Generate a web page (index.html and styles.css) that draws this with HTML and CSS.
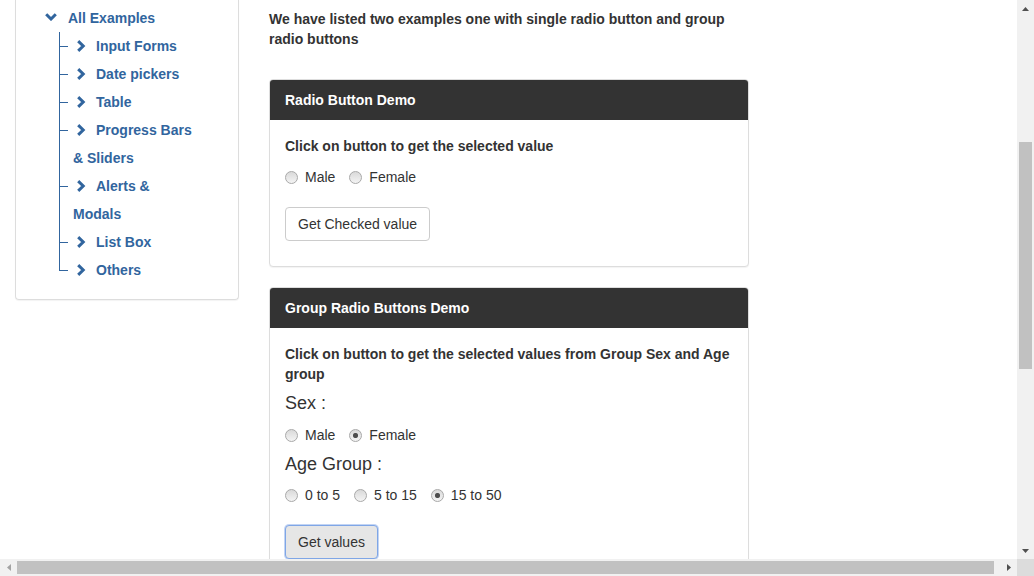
FILE: index.html
```html
<!DOCTYPE html>
<html lang="en">
<head>
<meta charset="utf-8">
<title>Radio Button Demo</title>
<link rel="stylesheet" href="styles.css">
</head>
<body>
<div class="window">
  <div class="viewport">
    <div class="page">
      <aside class="sidebar">
        <div class="tree-root">
          <svg class="chev-down" viewBox="0 0 12 8" width="12" height="8"><path d="M1.2 1.3 L6 6 L10.8 1.3"/></svg><a class="tree-link">All Examples</a>
        </div>
        <ul class="tree">
          <li><svg class="chev-right" viewBox="0 0 10 12" width="10" height="12"><path d="M2.2 1.2 L7.2 6 L2.2 10.8"/></svg><a class="tree-link">Input Forms</a></li>
          <li><svg class="chev-right" viewBox="0 0 10 12" width="10" height="12"><path d="M2.2 1.2 L7.2 6 L2.2 10.8"/></svg><a class="tree-link">Date pickers</a></li>
          <li><svg class="chev-right" viewBox="0 0 10 12" width="10" height="12"><path d="M2.2 1.2 L7.2 6 L2.2 10.8"/></svg><a class="tree-link">Table</a></li>
          <li><svg class="chev-right" viewBox="0 0 10 12" width="10" height="12"><path d="M2.2 1.2 L7.2 6 L2.2 10.8"/></svg><a class="tree-link">Progress Bars &amp; Sliders</a></li>
          <li><svg class="chev-right" viewBox="0 0 10 12" width="10" height="12"><path d="M2.2 1.2 L7.2 6 L2.2 10.8"/></svg><a class="tree-link">Alerts &amp; Modals</a></li>
          <li><svg class="chev-right" viewBox="0 0 10 12" width="10" height="12"><path d="M2.2 1.2 L7.2 6 L2.2 10.8"/></svg><a class="tree-link">List Box</a></li>
          <li><svg class="chev-right" viewBox="0 0 10 12" width="10" height="12"><path d="M2.2 1.2 L7.2 6 L2.2 10.8"/></svg><a class="tree-link">Others</a></li>
        </ul>
      </aside>

      <main class="content">
        <p class="intro">We have listed two examples one with single radio button and group radio buttons</p>

        <section class="panel">
          <div class="panel-heading">Radio Button Demo</div>
          <div class="panel-body">
            <p class="bold-text">Click on button to get the selected value</p>
            <div class="radio-row first-row">
              <label class="radio-label"><input class="radio" type="radio" name="optradio" value="Male">Male</label>
              <label class="radio-label"><input class="radio" type="radio" name="optradio" value="Female">Female</label>
            </div>
            <button class="btn btn-single" type="button">Get Checked value</button>
          </div>
        </section>

        <section class="panel">
          <div class="panel-heading">Group Radio Buttons Demo</div>
          <div class="panel-body">
            <p class="bold-text">Click on button to get the selected values from Group Sex and Age group</p>
            <h4 class="group-title sex-title">Sex :</h4>
            <div class="radio-row">
              <label class="radio-label"><input class="radio" type="radio" name="gender" value="Male">Male</label>
              <label class="radio-label"><input class="radio" type="radio" name="gender" value="Female" checked>Female</label>
            </div>
            <h4 class="group-title age-title">Age Group :</h4>
            <div class="radio-row">
              <label class="radio-label"><input class="radio" type="radio" name="ageGroup" value="0 - 5">0 to 5</label>
              <label class="radio-label"><input class="radio" type="radio" name="ageGroup" value="5 - 15">5 to 15</label>
              <label class="radio-label"><input class="radio" type="radio" name="ageGroup" value="15 - 50" checked>15 to 50</label>
            </div>
            <button class="btn btn-focused" type="button">Get values</button>
          </div>
        </section>
      </main>
    </div>
  </div>

  <div class="vscroll">
    <div class="sb-btn"><svg viewBox="0 0 7 4" width="7" height="4"><polygon class="arrow-dark" points="0,4 3.5,0 7,4"/></svg></div>
    <div class="vtrack"><div class="vthumb"></div></div>
    <div class="sb-btn"><svg viewBox="0 0 7 4" width="7" height="4"><polygon class="arrow-dark" points="0,0 7,0 3.5,4"/></svg></div>
  </div>

  <div class="hscroll">
    <div class="sb-btn"><svg viewBox="0 0 4 7" width="4" height="7"><polygon class="arrow-light" points="4,0 4,7 0,3.5"/></svg></div>
    <div class="htrack"><div class="hthumb"></div></div>
    <div class="sb-btn"><svg viewBox="0 0 4 7" width="4" height="7"><polygon class="arrow-dark" points="0,0 4,3.5 0,7"/></svg></div>
  </div>

  <div class="corner"></div>
</div>
</body>
</html>
```

FILE: styles.css
```css
* { box-sizing: border-box; }

html, body {
  margin: 0;
  padding: 0;
  overflow: hidden;
  background: #fff;
}

body {
  font-family: "Liberation Sans", Arial, Helvetica, sans-serif;
  font-size: 14px;
  line-height: 20px;
  color: #333;
}

.window {
  display: grid;
  grid-template-columns: 1017px 17px;
  grid-template-rows: 559px 17px;
  width: 1034px;
  height: 576px;
}

.viewport {
  overflow: hidden;
  background: #fff;
}

.page {
  display: flex;
  align-items: flex-start;
  padding-left: 15px;
}

/* ---------- Sidebar tree ---------- */
.sidebar {
  width: 224px;
  flex: none;
  border: 1px solid #ddd;
  border-top: none;
  border-radius: 0 0 4px 4px;
  box-shadow: 0 1px 1px rgba(0, 0, 0, 0.05);
  padding: 4px 0 15px 0;
}

.tree-link {
  color: #31659e;
  font-weight: bold;
  text-decoration: none;
}

.tree-root {
  line-height: 28px;
  padding-left: 29px;
  display: flex;
  align-items: center;
}

.chev-down {
  flex: none;
  margin-right: 11px;
  margin-top: -3px;
}

.chev-down path,
.chev-right path {
  fill: none;
  stroke: #31659e;
  stroke-width: 3;
  stroke-linejoin: miter;
}

.tree {
  list-style: none;
  margin: 0 0 0 43px;
  padding: 0;
  width: 138px;
}

.tree li {
  position: relative;
  line-height: 28px;
  padding-left: 14px;
}

.tree li::before {
  content: "";
  position: absolute;
  left: 0;
  top: 0;
  bottom: 0;
  border-left: 1px solid #31659e;
}

.tree li:last-child::before {
  bottom: auto;
  height: 15px;
}

.tree li::after {
  content: "";
  position: absolute;
  left: 1px;
  top: 14px;
  width: 8px;
  border-top: 1px solid #31659e;
}

.chev-right {
  vertical-align: middle;
  margin: -2px 10px 0 3px;
}

/* ---------- Main content ---------- */
.content {
  width: 480px;
  flex: none;
  margin-left: 30px;
}

.intro {
  font-weight: bold;
  margin: 9px 0 30px 0;
}

.panel {
  border: 1px solid #ddd;
  border-radius: 4px;
  box-shadow: 0 1px 1px rgba(0, 0, 0, 0.05);
  margin-bottom: 20px;
  background: #fff;
}

.panel-heading {
  background: #333;
  color: #fff;
  font-weight: bold;
  padding: 10px 15px;
  border-radius: 3px 3px 0 0;
}

.panel-body {
  padding: 16px 15px 15px 15px;
}

.bold-text {
  font-weight: bold;
  margin: 0;
}

.group-title {
  font-size: 18px;
  font-weight: normal;
  line-height: 20px;
}

.sex-title {
  margin: 9px 0 12px 0;
}

.age-title {
  margin: 9px 0 11px 0;
}

.radio-row {
  display: flex;
  height: 20px;
  align-items: center;
}

.first-row {
  margin-top: 11px;
}

.radio-label {
  display: inline-flex;
  align-items: center;
  margin-right: 14px;
  color: #333;
}

.radio {
  appearance: none;
  -webkit-appearance: none;
  width: 13px;
  height: 13px;
  margin: 0 7px 0 0;
  border-radius: 50%;
  border: 1px solid #a9a9a9;
  background: linear-gradient(#d9d9d9, #f4f4f4);
  flex: none;
}

.radio:checked {
  background:
    radial-gradient(circle, #4d4d4d 0 2px, #777 2.5px, transparent 3px),
    linear-gradient(#d9d9d9, #f4f4f4);
}

.btn {
  display: block;
  font-family: inherit;
  font-size: 14px;
  line-height: 20px;
  color: #333;
  background: #fff;
  border: 1px solid #ccc;
  border-radius: 4px;
  padding: 6px 12px;
  margin-top: 20px;
}

.btn-single {
  margin-bottom: 10px;
}

.btn-focused {
  background: #e6e6e6;
  border-color: #7fa6e6;
  box-shadow: 0 0 0 1px rgba(120, 160, 230, 0.45);
}

/* ---------- Scrollbars ---------- */
.vscroll {
  background: #f1f1f1;
  display: flex;
  flex-direction: column;
}

.hscroll {
  background: #f1f1f1;
  display: flex;
}

.sb-btn {
  width: 17px;
  height: 17px;
  flex: none;
  display: flex;
  align-items: center;
  justify-content: center;
}

.arrow-dark { fill: #505050; }
.arrow-light { fill: #a3a3a3; }

.vtrack {
  flex: 1;
}

.vthumb {
  margin: 125px 0 0 2px;
  width: 13px;
  height: 227px;
  background: #c1c1c1;
}

.htrack {
  flex: 1;
  display: flex;
  align-items: center;
}

.hthumb {
  width: 977px;
  height: 13px;
  background: #c1c1c1;
}

.corner {
  background: #dcdcdc;
}
```
